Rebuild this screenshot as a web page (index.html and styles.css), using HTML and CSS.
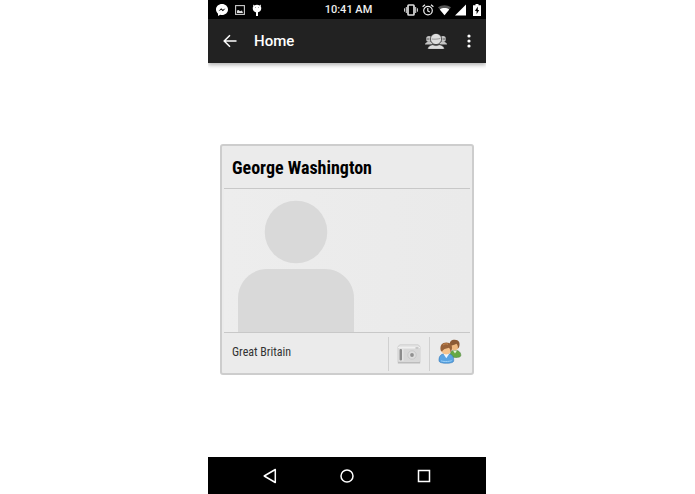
FILE: index.html
```html
<!DOCTYPE html>
<html lang="en">
<head>
  <meta charset="UTF-8">
  <meta name="viewport" content="width=device-width, initial-scale=1.0">
  <title>Home</title>
  <link rel="stylesheet" href="styles.css">
</head>
<body>

  <div class="phone">
    <div class="status-bar">
      <div class="status-icons">
        <!-- messenger -->
        <svg width="12" height="12" viewBox="0 0 12 12">
          <path d="M6 0C2.600 0 0 2.400 0 5.500c0 1.700.8 3.200 2 4.200V12l2.200-1.200c.6.200 1.200.2 1.800.2 3.400 0 6-2.400 6-5.500S9.400 0 6 0z" fill="#fff"/>
          <path d="M2.400 7.200L5.200 4.200 6.800 5.700 9.600 4.200 6.900 7.200 5.300 5.700z" fill="#000"/>
        </svg>
        <!-- picture -->
        <svg width="10" height="12" viewBox="0 0 10 12">
          <rect x=".6" y="1.600" width="8.800" height="8.800" fill="none" stroke="#ccc" stroke-width="1.100"/>
          <path d="M2 9V6.500l1.500-.5 1.500 1.200L7 6.500l1 2.500z" fill="#ddd"/>
        </svg>
        <!-- debug -->
        <svg width="10" height="12" viewBox="0 0 10 12">
          <path d="M1 .5l1.400.9c1.500-.9 3.700-.9 5.200 0L9 .5l-.3 1.700c1.500 2.700-.2 5.800-2.700 6.100V12H4V8.300C1.500 8-.2 4.900 1.300 2.200z" fill="#fff"/>
          <circle cx="3.500" cy="3.600" r=".4"/>
          <circle cx="6.500" cy="3.600" r=".4"/>
        </svg>
      </div>
      <span class="clock">10:41 AM</span>
      <div class="status-icons right">
        <!-- vibrate -->
        <svg width="14" height="12" viewBox="0 0 14 12" fill="none" stroke="#ddd">
          <rect x="4" y="1" width="6" height="10" rx=".8" stroke-width="1.700"/>
          <path d="M2.300 3v6M.6 4.300v3.400M11.700 3v6M13.400 4.300v3.400"/>
        </svg>
        <!-- alarm -->
        <svg width="12" height="12" viewBox="0 0 12 12" fill="none" stroke="#eee" stroke-width="1.200">
          <circle cx="6" cy="6.600" r="4.300"/>
          <path d="M.6 2.800L3 .8M11.400 2.800L9 .8M5.800 4v2.900l2 1.200"/>
        </svg>
        <!-- wifi -->
        <svg width="13" height="12" viewBox="0 0 13 12">
          <path d="M0 3.300C3.500.5 9.500.5 13 3.300L6.500 11.300z" fill="#555"/>
          <path d="M1.800 5.500c2.600-1.900 6.800-1.900 9.400 0L6.500 11.300z" fill="#fff"/>
        </svg>
        <!-- signal -->
        <svg width="11" height="12" viewBox="0 0 11 12">
          <path d="M11 .5V11.500H0z" fill="#fff"/>
        </svg>
        <!-- battery -->
        <svg class="battery" width="8" height="12" viewBox="0 0 8 12">
          <path d="M2.500 0h3v1.200H8V12H0V1.200h2.500z" fill="#fff"/>
          <path d="M4.800 2.600L1.900 7h1.700v3.300L6.200 6H4.800z" fill="#000"/>
        </svg>
      </div>
    </div>

    <header class="app-bar">
      <button type="button" class="icon-button" aria-label="Back">
        <svg width="14" height="14" viewBox="0 0 14 14" fill="none" stroke="#fff" stroke-width="1.500">
          <path d="M13.500 7H1.500M7 1.200L1.200 7 7 12.800"/>
        </svg>
      </button>
      <h1>Home</h1>
      <button type="button" class="icon-button people" aria-label="People">
        <svg width="22" height="16" viewBox="0 0 22 16">
          <g fill="#c4c4c4">
            <circle cx="4" cy="6" r="2.900"/>
            <circle cx="18" cy="6" r="2.900"/>
            <path d="M0 11.500c0-1.500 1.300-2.400 4-2.700h14c2.700.3 4 1.200 4 2.700z"/>
          </g>
          <path d="M1.400 6h3M17.600 6h3" stroke="#444" stroke-width=".8"/>
          <g fill="#dedede" stroke="#222" stroke-width=".7">
            <path d="M2.600 16.400c0-3 2.300-4.200 5.400-4.900h6c3.100.7 5.400 1.900 5.400 4.900z"/>
            <circle cx="11" cy="6" r="5.600"/>
          </g>
          <path d="M6.600 6c2.600.3 6 .2 8.800-.5" fill="none" stroke="#777" stroke-width=".7"/>
          <path d="M7.300 11.200c2.200 1.900 5.200 1.900 7.400 0" fill="none" stroke="#444" stroke-width=".8"/>
        </svg>
      </button>
      <button type="button" class="icon-button" aria-label="More options">
        <svg width="4" height="14" viewBox="0 0 4 14" fill="#fff">
          <circle cx="2" cy="2" r="1.600"/>
          <circle cx="2" cy="7" r="1.600"/>
          <circle cx="2" cy="12" r="1.600"/>
        </svg>
      </button>
    </header>

    <main>
      <article class="card">
        <h2>George Washington</h2>
        <div class="photo">
          <svg width="116" height="132" viewBox="0 0 116 132" fill="#d9d9d9">
            <circle cx="58" cy="32" r="31.300"/>
            <path d="M0 132V98C0 82 13 69 29 69h58c16 0 29 13 29 29v34z"/>
          </svg>
        </div>
        <div class="card-footer">
          <span class="country">Great Britain</span>
          <button type="button" class="card-button" aria-label="Camera">
            <svg width="24" height="20" viewBox="0 0 24 20">
              <path d="M1 2.500L3 .8h18l2 1.700V18H1z" fill="#e5e5e5" stroke="#c8c8c8" stroke-width=".8"/>
              <path d="M1 3.500h22" stroke="#f0f0f0"/>
              <rect x=".8" y="18" width="22.400" height="1.500" fill="#bcbcbc"/>
              <rect x="2.500" y="5" width="2.500" height="11.500" rx="1" fill="#8c8c8c"/>
              <rect x="6.500" y="5" width="16" height="12" fill="#d8d8d8"/>
              <circle cx="15" cy="11" r="4.200" fill="#dedede" stroke="#c4c4c4" stroke-width=".8"/>
              <circle cx="15" cy="11" r="1.900" fill="#909090"/>
              <rect x="18.500" y="3" width="3" height="2" fill="#c8c8c8"/>
            </svg>
          </button>
          <button type="button" class="card-button family" aria-label="Relatives">
            <svg width="24" height="26" viewBox="0 0 24 26">
              <path d="M12.500 17c-.5-4 1-5.500 4-5.800 4 0 6.500 2 6.300 5.400-.1 2-5.300 2.600-10.300 1z" fill="#65a843" stroke="#3d762a" stroke-width=".5"/>
              <path d="M15 11.500l2 3 2-3z" fill="#e8f3df"/>
              <circle cx="16.500" cy="6.800" r="4.400" fill="#efb981"/>
              <path d="M11.700 7.500C11 2.700 13.300.8 16.800.8c4 0 5.700 3 4.300 7.200l-1.300 1.700c.4-2-.1-3.700-1.300-4.900-2 1.300-4 1.200-6.800 2.700z" fill="#8c5a35"/>
              <path d="M1 22c-.3-4.800 1.700-7 6-7.200h2.700c4.300.2 6.300 2.600 6 7.200-.2 3.100-14.400 3.100-14.700 0z" fill="#5aa4e2" stroke="#2d6faf" stroke-width=".5"/>
              <path d="M5.500 14.900l2.800 4.300 2.800-4.300z" fill="#eef7ff"/>
              <path d="M3 21.500c.3 1.300 9 1.400 10.500 0" fill="none" stroke="#9bd0f7"/>
              <circle cx="8.200" cy="10.500" r="5" fill="#f4c28c"/>
              <path d="M2.700 11.500C1.700 6.200 4 3.400 8.300 3.400c4.500 0 6.700 3.100 5.300 8.200l-1.200 1.900c.2-2.300-.3-3.500-1.400-4.700C9 9.800 6 9 4 12.800z" fill="#986239"/>
              <path d="M5 6c1.500-1.300 3.500-1.400 5-.7" fill="none" stroke="#c98a50"/>
            </svg>
          </button>
        </div>
      </article>
    </main>

    <nav class="nav-bar">
      <button type="button" class="icon-button" aria-label="Back">
        <svg width="14" height="16" viewBox="0 0 14 16" fill="none" stroke="#fff" stroke-width="1.500" stroke-linejoin="round">
          <path d="M12.300 1.500v13L1.200 8z"/>
        </svg>
      </button>
      <button type="button" class="icon-button" aria-label="Home">
        <svg width="14" height="14" viewBox="0 0 14 14" fill="none" stroke="#fff" stroke-width="1.500">
          <circle cx="7" cy="7" r="6"/>
        </svg>
      </button>
      <button type="button" class="icon-button" aria-label="Recent apps">
        <svg width="14" height="14" viewBox="0 0 14 14" fill="none" stroke="#fff" stroke-width="1.500">
          <rect x="1.500" y="1.500" width="11" height="11"/>
        </svg>
      </button>
    </nav>
  </div>

</body>
</html>
```
FILE: styles.css
```css
* {
  box-sizing: border-box;
}

body {
  font-family: Roboto, sans-serif;
  margin: 0;
  padding-right: 1px;
  background-color: #fff;
}

svg {
  display: block;
}

button {
  background: none;
  border: none;
  padding: 0;
  cursor: pointer;
}

.phone {
  display: flex;
  flex-direction: column;
  width: 40%;
  min-width: 278px;
  min-height: 100vh;
  margin: 0 auto;
}

/* top bars */
.status-bar {
  display: grid;
  grid-template-columns: 1fr auto 1fr;
  align-items: center;
  height: 19px;
  padding: 0 5px 0 8px;
  background-color: #000;
  color: #eee;
}

.status-icons {
  display: flex;
  gap: 7px;
}

.status-icons.right {
  justify-content: flex-end;
  gap: 4px;
}

.status-icons .battery {
  margin-left: 3px;
}

.clock {
  font-size: 11px;
  font-weight: 500;
  line-height: 19px;
}

.app-bar {
  display: flex;
  align-items: center;
  height: 44px;
  padding: 0 15px;
  background-color: #222;
  box-shadow: 0 2px 4px rgba(0, 0, 0, 0.3);
  clip-path: inset(0 0 -6px 0);
}

.app-bar h1 {
  flex: 1;
  margin: 0 0 0 17px;
  color: #fff;
  font-size: 15px;
  font-weight: 500;
}

.app-bar .people {
  margin-right: 20px;
}

main {
  display: flex;
  flex: 1;
  align-items: center;
  padding: 12px 12px 14px;
}

/* person card */
.card {
  width: 100%;
  padding: 2px;
  border: 2px solid #cdcdcd;
  border-radius: 3px;
  background-color: #ebebeb;
  font-family: "Roboto Condensed", "Liberation Sans Narrow", Roboto, sans-serif;
}

.card h2 {
  margin: 0;
  padding: 0 8px;
  border-bottom: 1px solid #c8c8c8;
  color: #000;
  font-size: 18px;
  font-weight: 700;
  line-height: 40px;
}

.photo {
  padding: 11px 14px 0;
  border-bottom: 1px solid #c8c8c8;
  background: linear-gradient(to right, #ededed, #eaeaea);
}

.card-footer {
  display: flex;
  height: 38px;
}

.country {
  flex: 1;
  padding-left: 8px;
  color: #333;
  font-size: 12px;
  line-height: 38px;
}

.card-button {
  display: flex;
  align-items: center;
  justify-content: center;
  width: 41px;
  margin-top: 4px;
  border-left: 1px solid #d0d0d0;
}

.card-button.family {
  padding-bottom: 4px;
}

/* bottom bar */
.nav-bar {
  display: flex;
  align-items: center;
  justify-content: space-between;
  height: 37px;
  padding: 0 55px;
  background-color: #000;
}
```
